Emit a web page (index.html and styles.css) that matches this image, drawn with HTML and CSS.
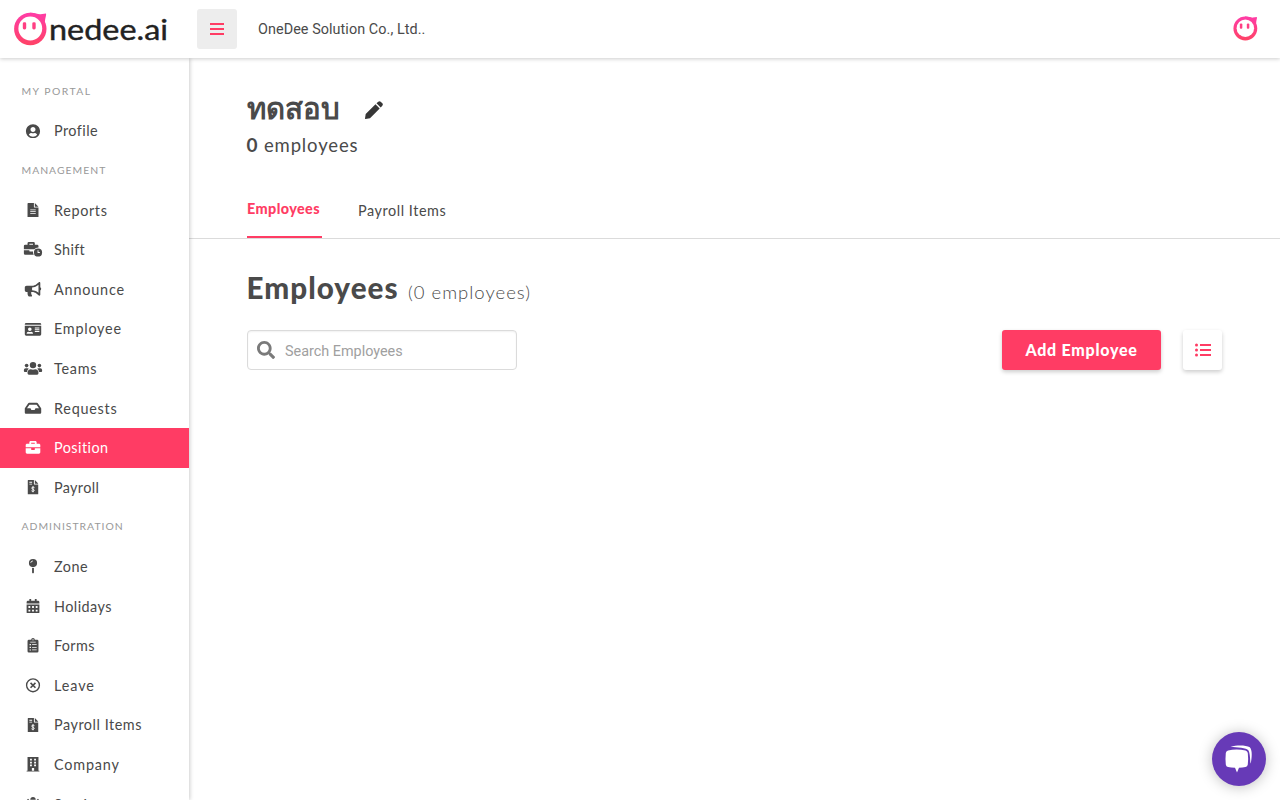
FILE: index.html
```html
<!DOCTYPE html>
<html lang="en">
<head>
<meta charset="utf-8">
<title>OneDee – Position</title>
<link rel="stylesheet" href="styles.css">
</head>
<body>
<svg class="defs" aria-hidden="true">
  <defs>
    <linearGradient id="pink" gradientUnits="userSpaceOnUse" x1="0" y1="1" x2="0" y2="33"><stop offset="0" stop-color="#ff3ca6"/><stop offset="1" stop-color="#ff4266"/></linearGradient>
    <symbol id="face" viewBox="0 0 34 34">
      <circle cx="16.800" cy="17" r="16.200" fill="url(#pink)"/>
      <path fill="url(#pink)" d="M16 .9C21 .5 24 2.400 27 2.200L32.500 1.400C33 3.500 31.500 5.500 31.500 10L24 8Z"/>
      <circle cx="16.800" cy="16.500" r="11.900" fill="#fff"/>
      <rect x="9.300" y="10.300" width="3.400" height="7.200" rx="1.400" fill="#ff3f84"/><rect x="18.800" y="10.300" width="3.400" height="7.200" rx="1.400" fill="#ff3f84"/>
    </symbol>
    <symbol id="invoice" viewBox="0 0 384 512">
      <path fill-rule="evenodd" d="M24 0H224V136Q224 160 248 160H384V488Q384 512 360 512H24Q0 512 0 488V24Q0 0 24 0ZM256 0 384 128H256ZM64 64V96H160V64ZM64 128V160H160V128Z"/>
      <path d="M242 268Q220 250 190 250C135 250 132 310 186 322C250 337 245 398 190 398Q158 398 138 378M192 220V430" fill="none" stroke="var(--cut)" stroke-width="34"/>
    </symbol>
  </defs>
</svg>

<header class="topbar">
  <a class="brand">
    <svg class="brand-face"><use href="#face"/></svg>
    <svg class="brand-name" viewBox="0 0 120 40"><text x="0" y="31" textLength="119" lengthAdjust="spacingAndGlyphs">nedee.ai</text></svg>
  </a>
  <button class="burger" aria-label="Menu"><svg viewBox="0 0 14 12"><path d="M0 0H14V2H0ZM0 5H14V7H0ZM0 10H14V12H0Z"/></svg></button>
  <span class="company">OneDee Solution Co., Ltd..</span>
  <svg class="avatar"><use href="#face"/></svg>
</header>

<div class="shell">
  <nav class="sidebar">
    <div class="group g1">MY PORTAL</div>
    <a class="item i-profile"><svg viewBox="0 0 496 512"><path d="M248 8C111 8 0 119 0 256s111 248 248 248 248-111 248-248S385 8 248 8zm0 96c48.600 0 88 39.400 88 88s-39.400 88-88 88-88-39.400-88-88 39.400-88 88-88zm0 344c-58.700 0-111.300-26.600-146.500-68.200 18.800-35.400 55.600-59.800 98.500-59.800 2.400 0 4.800.4 7.100 1.100 13 4.200 26.600 6.900 40.900 6.900 14.300 0 28-2.700 40.900-6.900 2.300-.7 4.700-1.100 7.100-1.100 42.900 0 79.700 24.400 98.500 59.800C359.300 421.400 306.700 448 248 448z"/></svg><span>Profile</span></a>
    <div class="group g2">MANAGEMENT</div>
    <a class="item i-reports"><svg viewBox="0 0 384 512"><path fill-rule="evenodd" d="M24 0H224V136Q224 160 248 160H384V488Q384 512 360 512H24Q0 512 0 488V24Q0 0 24 0ZM256 0 384 128H256ZM96 224V252H288V224ZM96 288V316H288V288ZM96 352V380H288V352Z"/></svg><span>Reports</span></a>
    <a class="item i-shift"><svg viewBox="0 0 640 512"><path fill-rule="evenodd" d="M48 96H128V48Q128 0 176 0H336Q384 0 384 48V96H464Q512 96 512 144V193Q425 187 366 256H0V144Q0 96 48 96ZM192 64V96H320V64ZM0 288H192V320Q192 336 208 336H304Q314 336 320 328Q313 388 345 448H48Q0 448 0 400Z"/><path fill-rule="evenodd" d="M496 224A144 144 0 1 0 496 512A144 144 0 1 0 496 224ZM480 288H512V352H560V384H480Z"/></svg><span>Shift</span></a>
    <a class="item i-announce"><svg viewBox="0 0 576 512"><path d="M576 240c0-23.630-12.950-44.040-32-55.120V32.010C544 23.260 537.020 0 512 0c-7.120 0-14.190 2.380-19.980 7.020l-85.030 68.030C364.280 109.190 310.660 128 256 128H64c-35.350 0-64 28.650-64 64v96c0 35.350 28.650 64 64 64h33.700c-1.390 10.480-2.180 21.140-2.180 32 0 39.770 9.260 77.350 25.560 110.940 5.190 10.690 16.520 17.060 28.400 17.060h74.280c26.050 0 41.690-29.840 25.900-50.560-16.400-21.520-26.150-48.360-26.150-77.440 0-11.110 1.620-21.790 4.410-32H256c54.660 0 108.280 18.810 150.980 52.950l85.030 68.030a32.023 32.023 0 0 0 19.980 7.020c24.920 0 32-22.780 32-32V295.130C563.050 284.040 576 263.630 576 240zm-96 141.420l-33.050-26.440C392.950 311.780 325.120 288 256 288v-96c69.120 0 136.950-23.780 190.950-66.980L480 98.580v282.840z"/></svg><span>Announce</span></a>
    <a class="item i-employee"><svg viewBox="0 0 576 512"><path fill-rule="evenodd" d="M48 32H528Q576 32 576 80V96H0V80Q0 32 48 32ZM0 128H576V432Q576 480 528 480H48Q0 480 0 432ZM352 192V224H512V192ZM352 256V288H512V256ZM352 320V352H512V320ZM176 192A64 64 0 1 0 176 320A64 64 0 1 0 176 192ZM64 396Q64 416 80 416H272Q288 416 288 396Q280 344 230 340Q176 362 122 340Q72 344 64 396Z"/></svg><span>Employee</span></a>
    <a class="item i-teams"><svg viewBox="0 0 640 512"><circle cx="96" cy="160" r="64"/><circle cx="544" cy="160" r="64"/><circle cx="320" cy="144" r="112"/><path d="M64 256H128Q154 256 174 274Q118 306 108 384H32Q0 384 0 352V320Q0 256 64 256ZM576 256H512Q486 256 466 274Q522 306 532 384H608Q640 384 640 352V320Q640 256 576 256ZM243 288Q320 318 397 288C465 288 512 338 512 403V432Q512 480 464 480H176Q128 480 128 432V403C128 338 175 288 243 288Z"/></svg><span>Teams</span></a>
    <a class="item i-requests"><svg viewBox="0 0 576 512"><path d="M567.938 243.908L462.250 85.374A48.003 48.003 0 0 0 422.311 64H153.689a48 48 0 0 0-39.938 21.374L8.062 243.908A47.994 47.994 0 0 0 0 270.533V400c0 26.510 21.490 48 48 48h480c26.510 0 48-21.490 48-48V270.533a47.994 47.994 0 0 0-8.062-26.625zM162.252 128h251.497l85.333 128H376l-32 64H232l-32-64H76.918l85.334-128z"/></svg><span>Requests</span></a>
    <a class="item i-position active"><svg viewBox="0 0 512 512"><path d="M320 336c0 8.840-7.160 16-16 16h-96c-8.840 0-16-7.160-16-16v-48H0v144c0 25.600 22.400 48 48 48h416c25.600 0 48-22.400 48-48V288H320v48zm144-208h-80V80c0-25.600-22.400-48-48-48H176c-25.600 0-48 22.400-48 48v48H48c-25.600 0-48 22.400-48 48v80h512v-80c0-25.600-22.400-48-48-48zm-144 0H192V96h128v32z"/></svg><span>Position</span></a>
    <a class="item i-payroll"><svg viewBox="0 0 384 512"><use href="#invoice"/></svg><span>Payroll</span></a>
    <div class="group g3">ADMINISTRATION</div>
    <a class="item i-zone"><svg viewBox="0 0 288 512"><path fill-rule="evenodd" d="M112 316Q144 322 176 316V480L144 512 112 480ZM144 0A144 144 0 1 0 144 288A144 144 0 1 0 144 0ZM144 76Q80 80 76 144H52Q56 58 144 52Z"/></svg><span>Zone</span></a>
    <a class="item i-holidays"><svg viewBox="0 0 448 512"><path fill-rule="evenodd" d="M96 0H160V64H288V0H352V64H400Q448 64 448 112V160H0V112Q0 64 48 64H96ZM0 192H448V464Q448 512 400 512H48Q0 512 0 464ZM64 248V312H128V248ZM192 248V312H256V248ZM320 248V312H384V248ZM64 376V440H128V376ZM192 376V440H256V376ZM320 376V440H384V376Z"/></svg><span>Holidays</span></a>
    <a class="item i-forms"><svg viewBox="0 0 384 512"><path fill-rule="evenodd" d="M48 64H128A64 64 0 0 1 256 64H336Q384 64 384 112V464Q384 512 336 512H48Q0 512 0 464V112Q0 64 48 64ZM192 40A24 24 0 1 0 192 88A24 24 0 1 0 192 40ZM96 128V160H288V128ZM72 208V256H120V208ZM160 216V244H320V216ZM72 304V352H120V304ZM160 312V340H320V312ZM72 400V440H120V400ZM160 404V432H320V404Z"/></svg><span>Forms</span></a>
    <a class="item i-leave"><svg viewBox="0 0 512 512"><g fill="none" stroke="currentColor"><circle cx="256" cy="256" r="225" stroke-width="48"/><path d="M170 170 342 342M342 170 170 342" stroke-width="56"/></g></svg><span>Leave</span></a>
    <a class="item i-pitems"><svg viewBox="0 0 384 512"><use href="#invoice"/></svg><span>Payroll Items</span></a>
    <a class="item i-company"><svg viewBox="0 0 448 512"><path fill-rule="evenodd" d="M32 0H416V480H448V512H0V480H32ZM120 64V124H184V64ZM264 64V124H328V64ZM120 164V224H184V164ZM264 164V224H328V164ZM120 264V324H184V264ZM264 264V324H328V264ZM184 384V480H264V384Z"/></svg><span>Company</span></a>
    <a class="item i-services"><svg viewBox="0 0 512 512"><path d="M160 96Q165 0 256 0T352 96ZM150 130H362L430 60 462 92 390 165V240H500V288H390V480H122V288H12V240H122V165L50 92 82 60Z"/></svg><span>Service</span></a>
  </nav>

  <main class="main">
    <section class="heading">
      <div class="title-row"><h1>ทดสอบ</h1><svg class="pencil" viewBox="0 0 18 18"><path d="M10.500 3.300 14.700 7.500 5 17.300.5 18Q0 18 0 17.500L.7 13ZM11.500 2.300 13.300.7Q14.500-.4 15.700.7L17.300 2.300Q18.400 3.500 17.300 4.700L15.700 6.500Z"/></svg></div>
      <p class="count"><b>0</b> <span>employees</span></p>
    </section>
    <div class="tabs"><a class="tab on"><span>Employees</span></a><a class="tab"><span>Payroll Items</span></a></div>
    <section class="content">
      <div class="subhead"><h2>Employees</h2><span>(0 employees)</span></div>
      <div class="tools">
        <label class="search"><svg viewBox="0 0 512 512"><path d="M505 442.700L405.300 343c-4.500-4.500-10.600-7-17-7H372c27.600-35.300 44-79.700 44-128C416 93.100 322.900 0 208 0S0 93.100 0 208s93.100 208 208 208c48.300 0 92.700-16.400 128-44v16.300c0 6.400 2.500 12.500 7 17l99.700 99.700c9.400 9.400 24.600 9.400 33.900 0l28.300-28.300c9.400-9.400 9.400-24.600.1-34zM208 336c-70.700 0-128-57.200-128-128 0-70.700 57.200-128 128-128 70.700 0 128 57.200 128 128 0 70.700-57.200 128-128 128z"/></svg><span>Search Employees</span></label>
        <button class="add"><span>Add Employee</span></button>
        <button class="list" aria-label="List"><svg viewBox="0 0 16 14"><path d="M5 1H16V3H5ZM5 6H16V8H5ZM5 11H16V13H5Z"/><circle cx="1.500" cy="2" r="1.500"/><circle cx="1.500" cy="7" r="1.500"/><circle cx="1.500" cy="12" r="1.500"/></svg></button>
      </div>
    </section>
  </main>
</div>

<button class="chat" aria-label="Chat"><svg viewBox="0 0 54 54"><path d="M18.500 14.800C25 13 34 13.200 37.800 15.300C40.500 18 40 26 38.700 31.500C38 31 38.500 22 36.500 18.500C34.500 15.800 25 15.400 18.500 14.800Z"/><path d="M16 18.500Q24.500 16.500 33.500 18.500Q35.500 19 35.800 21Q36.500 27 35.800 32.500Q35.500 34.500 33.500 35Q30.500 35.700 27 35.800L25 40.500 23 35.800Q19 35.700 16 35Q14 34.500 13.800 32.500Q13.200 27 13.800 21Q14 19 16 18.500Z"/></svg></button>
</body>
</html>
```

FILE: styles.css
```css
* { box-sizing: border-box; }
body { margin: 0; height: 800px; overflow: hidden; display: flex; flex-direction: column; background: #fff; color: #4a4a4a; font-family: Lato, "Noto Sans", sans-serif; font-size: 14.4px; }
button { border: 0; padding: 0; font: inherit; }
svg { fill: currentColor; display: block; flex: none; }
h1, h2, p { margin: 0; }
.defs { position: absolute; width: 0; height: 0; }

.topbar { position: relative; z-index: 2; flex: none; height: 58px; display: flex; align-items: center; padding: 0 22px 0 13px; box-shadow: 0 1px 4px rgba(0,0,0,.2); background: #fff; }
.brand { display: flex; width: 184px; align-items: center; }
.brand-face { width: 35px; height: 34px; }
.brand-name { width: 120px; height: 40px; margin-left: 1px; fill: #222; stroke: #222; stroke-width: .4px; }
.brand-name text { font: 29px Lato, sans-serif; }
.burger { width: 40px; height: 40px; border-radius: 3px; background: #ededed; color: #ff3c64; display: flex; align-items: center; justify-content: center; }
.burger svg { width: 14px; height: 12px; }
.company { margin-left: 21px; font-family: Roboto, sans-serif; font-size: 14.4px; letter-spacing: .06px; }
.avatar { width: 25px; height: 25px; margin: -2px 0 0 auto; }

.shell { flex: 1; min-height: 0; display: flex; }
.sidebar { position: relative; z-index: 1; flex: none; width: 189px; padding-top: 13.6px; box-shadow: 1px 0 4px rgba(0,0,0,.2); background: #fff; }
.group { height: 39.6px; line-height: 39.6px; padding-left: 21.500px; font-size: 10.400px; letter-spacing: 1px; color: #999; white-space: nowrap; }
.g1 { letter-spacing: 1.45px; }
.item { --cut: #fff; height: 39.6px; display: grid; grid-template-columns: 21px auto; column-gap: 11px; padding-left: 22px; align-items: center; justify-content: start; justify-items: center; letter-spacing: .35px; white-space: nowrap; }
.item svg { height: 14.6px; width: 20px; }
.i-profile, .i-holidays, .i-position { letter-spacing: .45px; }
.i-reports { letter-spacing: .65px; }
.i-announce, .i-company { letter-spacing: .83px; }
.i-employee, .i-teams, .i-requests { letter-spacing: .75px; }
.i-zone, .i-pitems { letter-spacing: .53px; }
.i-leave { letter-spacing: .9px; }
.active { background: #ff3c64; color: #fff; }

.main { flex: 1; min-width: 0; }
.heading { height: 124px; padding: 31px 0 0 57.500px; }
.title-row { display: flex; align-items: flex-start; height: 40px; gap: 25px; }
h1 { font-size: 29.400px; line-height: 38px; font-weight: 700; }
.pencil { width: 18px; height: 18px; color: #363636; margin-top: 12px; }
.count { font-size: 18.500px; line-height: 32px; letter-spacing: .85px; }
.count b { font-size: 19px; }
.tabs { height: 57px; display: flex; gap: 36px; padding-left: 58px; border-bottom: 1px solid #dbdbdb; }
.tab { line-height: 57px; letter-spacing: .56px; }
.on { width: 75px; color: #ff3c64; font-weight: 900; border-bottom: 2px solid #ff3c64; line-height: 54px; letter-spacing: .4px; white-space: nowrap; }
.content { padding: 27px 58px 0 57.500px; }
.subhead { display: flex; align-items: baseline; height: 64px; }
h2 { width: 161.500px; font-size: 29.600px; line-height: 44px; font-weight: 900; letter-spacing: 1.05px; }
.subhead span { font-size: 18.500px; font-weight: 300; letter-spacing: 1px; }
.tools { display: flex; align-items: center; }
.search { width: 270px; height: 40px; border: 1px solid #dbdbdb; border-radius: 4px; display: flex; align-items: center; gap: 10.500px; padding-left: 9px; box-shadow: inset 0 1px 2px rgba(0,0,0,.06); color: #a0a0a0; font-family: Roboto, sans-serif; }
.search svg { width: 18px; height: 18px; color: #7a7a7a; }
.search span { padding-top: 2px; }
.add { margin-left: auto; width: 159px; height: 40px; border-radius: 3px; background: #ff3c64; color: #fff; font-size: 16px; font-weight: 900; letter-spacing: .75px; padding-bottom: 2px; box-shadow: 0 2px 4px rgba(0,0,0,.2); }
.list { margin-left: 22px; width: 39px; height: 40px; border-radius: 3px; background: #fff; color: #ff3c64; display: flex; align-items: center; justify-content: center; box-shadow: 0 2px 4px rgba(0,0,0,.2); }
.list svg { width: 16px; height: 14px; }
.chat { position: fixed; z-index: 3; right: 14px; bottom: 14px; width: 54px; height: 54px; border-radius: 50%; background: #673ab7; color: #fff; box-shadow: 0 1px 14px rgba(0,0,0,.25); }
.chat svg { width: 54px; height: 54px; }
```
